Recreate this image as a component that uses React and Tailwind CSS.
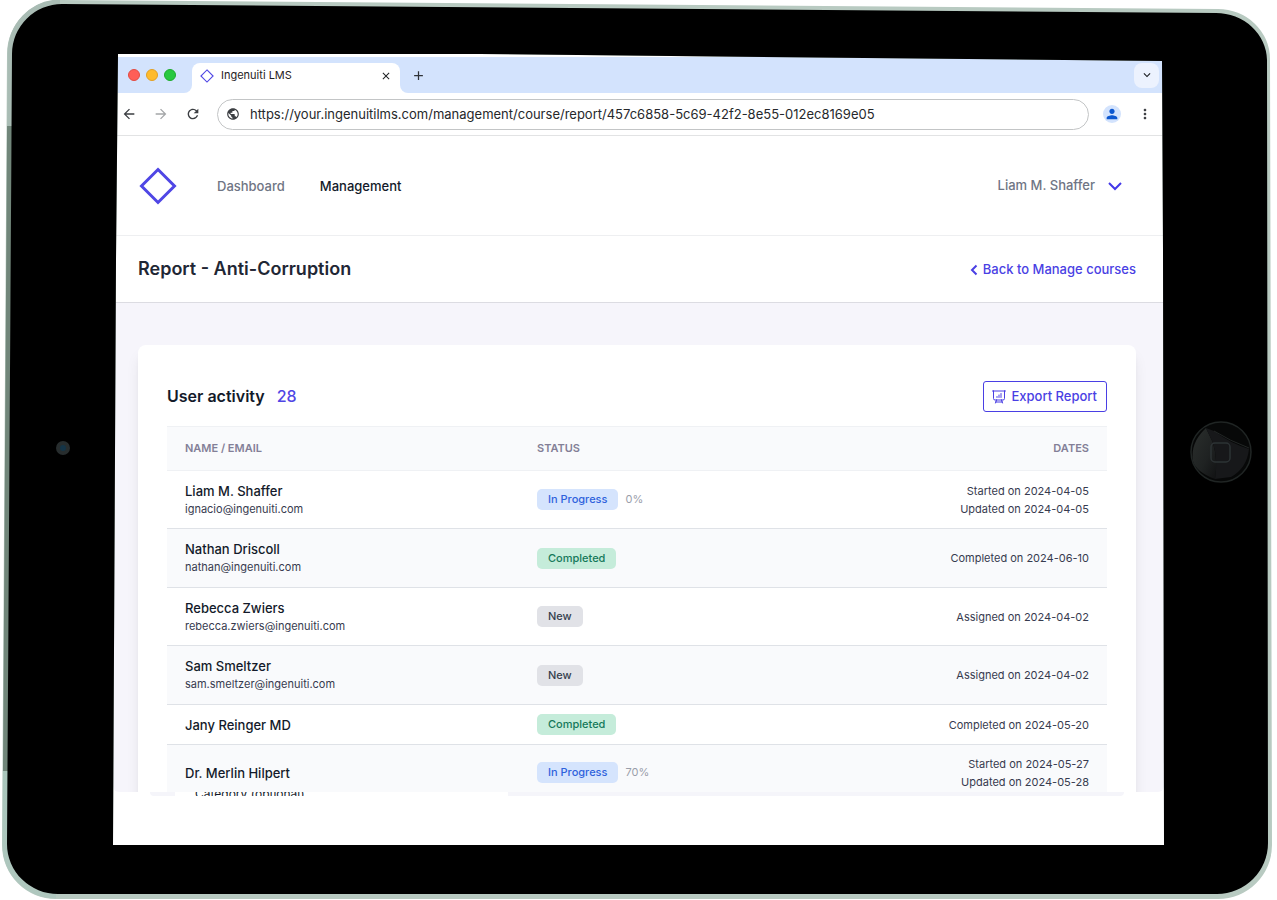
import {
  MdAdd,
  MdArrowBack,
  MdArrowForward,
  MdClose,
  MdExpandMore,
  MdMoreVert,
  MdPerson,
  MdPublic,
  MdRefresh,
} from 'react-icons/md'
import { HiOutlinePresentationChartBar } from 'react-icons/hi2'

const USERS = [
  { name: 'Liam M. Shaffer', email: 'ignacio@ingenuiti.com', status: 'In Progress', progress: 0, dates: ['Started on 2024-04-05', 'Updated on 2024-04-05'] },
  { name: 'Nathan Driscoll', email: 'nathan@ingenuiti.com', status: 'Completed', dates: ['Completed on 2024-06-10'] },
  { name: 'Rebecca Zwiers', email: 'rebecca.zwiers@ingenuiti.com', status: 'New', dates: ['Assigned on 2024-04-02'] },
  { name: 'Sam Smeltzer', email: 'sam.smeltzer@ingenuiti.com', status: 'New', dates: ['Assigned on 2024-04-02'] },
  { name: 'Jany Reinger MD', status: 'Completed', dates: ['Completed on 2024-05-20'] },
  { name: 'Dr. Merlin Hilpert', status: 'In Progress', progress: 70, dates: ['Started on 2024-05-27', 'Updated on 2024-05-28'] },
]

const BADGES = {
  'In Progress': 'bg-[#d5e4fd] text-[#2f62dc]',
  Completed: 'bg-[#c5ecda] text-[#15795a]',
  New: 'bg-[#e1e2e7] text-[#363f4e]',
}

function Diamond({ className, stroke }) {
  return (
    <svg viewBox="0 0 38 38" className={className} fill="none" stroke="#4f46e5" strokeWidth={stroke} aria-hidden="true">
      <path d="M19 2.5 L35.5 19 L19 35.5 L2.5 19 Z" />
    </svg>
  )
}

// Tablet bezel, laid over the screen with a hole cut for it
function TabletFrame() {
  return (
    <svg viewBox="0 0 1277 900" preserveAspectRatio="none" className="absolute inset-0 w-full h-full pointer-events-none" aria-hidden="true">
      <defs>
        <linearGradient id="edge" x1="0" x2="0" y1="0" y2="900" gradientUnits="userSpaceOnUse">
          <stop offset="0" stopColor="#a9bcb4" />
          <stop offset="0.14" stopColor="#a9bcb4" />
          <stop offset="0.14" stopColor="#71867a" />
          <stop offset="0.857" stopColor="#71867a" />
          <stop offset="0.857" stopColor="#a9c5bb" />
          <stop offset="1" stopColor="#afc7be" />
        </linearGradient>
        <linearGradient id="glass" x1="0" x2="1" y1="0" y2="1">
          <stop offset="0" stopColor="#2b2f2d" />
          <stop offset="0.6" stopColor="#1f2222" />
          <stop offset="1" stopColor="#111213" />
        </linearGradient>
      </defs>
      <path
        fill="#b8cac1"
        fillRule="evenodd"
        d="M60 0 L1218 9 A52 50 0 0 1 1270 59 L1272 845 A54 54 0 0 1 1218 899 L56 899 A54 54 0 0 1 2 845 L7 54 A53 54 0 0 1 60 0 Z M118 54 L480 54 L1162 61 L1163 250 L1164 845 L113 845 L116 260 Z"
      />
      <path fill="none" stroke="url(#edge)" strokeWidth="5" d="M60 2 A50 52 0 0 0 10 54 L5 845 A51 51 0 0 0 56 896" />
      <path
        fill="#000"
        fillRule="evenodd"
        d="M62 4 L1216 13 A51 48 0 0 1 1267 60 L1268 843 A51 51 0 0 1 1217 894 L58 894 A51 50 0 0 1 7 844 L12 54 A50 50 0 0 1 62 4 Z M118 54 L480 54 L1162 61 L1163 250 L1164 845 L113 845 L116 260 Z"
      />
      <circle cx="63" cy="448" r="7" fill="#272d2e" />
      <circle cx="63" cy="448" r="3" fill="#143447" />
      <circle cx="1221" cy="452" r="30" fill="#070808" stroke="#202524" strokeWidth="1.5" />
      <path d="M1206 428 Q1190 443 1193 461 Q1196 472 1215 479 Q1218 460 1213 443 Z" fill="url(#glass)" />
      <path d="M1206 428 L1214 431 Q1230 443 1249 449 Q1247 468 1231 477 L1215 479 Q1218 460 1213 443 Z" fill="#17181a" />
      <path d="M1214 431 Q1230 441 1249 448" fill="none" stroke="#222625" />
      <rect x="1211" y="443" width="19" height="19" rx="4" fill="none" stroke="#2d3335" strokeWidth="1.5" />
    </svg>
  )
}

function TabStrip() {
  return (
    <div className="flex h-9 mt-[3px]">
      <div className="w-[79px] bg-[#d3e3fd] rounded-br-lg flex items-center gap-[6px] pl-[15px]">
        <span className="w-3 h-3 rounded-full bg-[#fe5e57] border border-[#e24b42]" />
        <span className="w-3 h-3 rounded-full bg-[#febb2e] border border-[#e2a024]" />
        <span className="w-3 h-3 rounded-full bg-[#28c840] border border-[#1dab2d]" />
      </div>
      <div className="w-[208px] bg-[#d3e3fd] pt-[6px]">
        <div className="h-full bg-white rounded-t-lg flex items-center px-2 pb-[5px]">
          <Diamond className="w-[14px] h-[14px]" stroke="3" />
          <span className="ml-[7px] flex-1 text-[11px] text-[#1f2124]">Ingenuiti LMS</span>
          <button aria-label="Close tab" className="text-[#1f2124]"><MdClose size={12} /></button>
        </div>
      </div>
      <div className="flex-1 bg-[#d3e3fd] rounded-bl-lg flex items-center justify-between pl-[11px] pr-[5px]">
        <button aria-label="New tab" className="text-[#2f3338]"><MdAdd size={15} /></button>
        <button aria-label="Search tabs" className="w-[25px] h-[25px] rounded-lg bg-[#ecf2fe] flex items-center justify-center text-[#1f2124]">
          <MdExpandMore size={14} />
        </button>
      </div>
    </div>
  )
}

function Toolbar() {
  return (
    <div className="h-[43px] shrink-0 border-b border-[#e2e3e4] flex items-center pl-2 pr-[11px] text-[#3b3e42]">
      <button aria-label="Back"><MdArrowBack size={16} /></button>
      <button aria-label="Forward" className="ml-4 text-[#a4a6a8]"><MdArrowForward size={16} /></button>
      <button aria-label="Reload" className="ml-4"><MdRefresh size={16} /></button>
      <div className="ml-4 flex-1 h-[31px] rounded-full border border-[#c3c5c6] flex items-center pl-2 pr-4">
        <MdPublic size={14} />
        <input
          type="text"
          aria-label="Address"
          readOnly
          value="https://your.ingenuitilms.com/management/course/report/457c6858-5c69-42f2-8e55-012ec8169e05"
          className="ml-[10px] pt-px flex-1 min-w-0 text-[13px] text-[#26282b] outline-none"
        />
      </div>
      <button aria-label="Profile" className="ml-[14px] w-[18px] h-[18px] rounded-full bg-[#d3e3fd] text-[#0b57d0] flex items-center justify-center">
        <MdPerson size={16} />
      </button>
      <button aria-label="Menu" className="ml-4"><MdMoreVert size={16} /></button>
    </div>
  )
}

function UserRow({ user }) {
  return (
    <tr className={`border-b border-[#dfe2e7] even:bg-[#f9fafc] ${user.email ? 'h-[58px] even:h-[59px]' : user.dates.length > 1 ? 'h-[56px]' : 'h-[40px]'}`}>
      <td className="pl-[18px]">
        <div className="text-[13px] leading-[18px] font-medium text-[#131a2a]">{user.name}</div>
        {user.email && <div className="text-[11px] leading-[18px] text-[#373b4f]">{user.email}</div>}
      </td>
      <td>
        <div className="flex items-center gap-[7px]">
          <span className={`h-[21px] px-[11px] rounded-[5px] text-[11px] leading-[21px] font-medium ${BADGES[user.status]}`}>{user.status}</span>
          {user.progress !== undefined && <span className="text-[11px] text-[#9a9eaa]">{user.progress}%</span>}
        </div>
      </td>
      <td className="pr-[18px] text-right text-[11px] leading-[18px] text-[#373b4f]">
        {user.dates.map((d) => (
          <div key={d}>{d}</div>
        ))}
      </td>
    </tr>
  )
}

export default function App() {
  return (
    <div className="relative h-screen px-[113px] pt-[54px] pb-[55px] bg-white overflow-hidden font-['Inter',sans-serif]">
      <div className="h-full flex flex-col bg-white">
        <TabStrip />
        <Toolbar />

        <div className="flex-1 min-h-0 overflow-hidden rounded-b-md bg-[#f6f5fb]">
          <header className="h-[100px] bg-white border-b border-[#eeeff1] flex items-center justify-between pl-[26px] pr-[41px]">
            <div className="flex items-center">
              <Diamond className="w-[38px] h-[38px]" stroke="3" />
              <nav className="ml-10 pt-[3px] flex gap-[35px] text-[13px] font-medium">
                <a href="#dashboard" className="text-[#6f7584]">Dashboard</a>
                <a href="#management" className="text-[#131a2a]">Management</a>
              </nav>
            </div>
            <button className="flex items-center gap-3 text-[13px] font-medium text-[#6f7584]">
              Liam M. Shaffer
              <svg width="16" height="16" viewBox="0 0 16 16" fill="none" stroke="#4338e8" strokeWidth="2" aria-hidden="true">
                <path d="M2 5 L8 11 L14 5" />
              </svg>
            </button>
          </header>

          <div className="h-[67px] bg-white border-b border-[#dcdce2] flex items-center justify-between pl-[25px] pr-7">
            <h1 className="text-lg font-semibold text-[#1f2735]">Report - Anti-Corruption</h1>
            <a href="#courses" className="pt-px flex items-center gap-[5px] text-[13px] font-medium text-[#4a3fe4]">
              <svg width="8" height="12" viewBox="0 0 8 12" fill="none" stroke="currentColor" strokeWidth="2" aria-hidden="true">
                <path d="M6.5 1.5 L2 6 L6.5 10.5" />
              </svg>
              Back to Manage courses
            </a>
          </div>

          <main className="pt-[42px] pl-[25px] pr-7">
            <section className="bg-white rounded-lg shadow-lg px-[29px] pt-9 pb-9">
              <div className="flex items-center justify-between h-[31px] mb-[14px]">
                <h2 className="flex gap-3 pb-[2px] text-base font-semibold text-[#131a2a]">
                  User activity <span className="font-medium text-[#5046e5]">28</span>
                </h2>
                <button className="h-[31px] pl-[7px] pr-[9px] flex items-center gap-1 rounded-[3px] border border-[#4a3fe4] text-[13px] font-medium text-[#4a3fe4]">
                  <HiOutlinePresentationChartBar size={16} />
                  Export Report
                </button>
              </div>
              <table className="w-full table-fixed border-collapse text-left">
                <thead>
                  <tr className="h-[44px] bg-[#f9fafc] border-y border-[#eff1f4] text-[11px] text-[#837f97]">
                    <th className="w-[370px] pl-[18px] font-semibold">NAME / EMAIL</th>
                    <th className="font-semibold">STATUS</th>
                    <th className="pr-[18px] font-semibold text-right">DATES</th>
                  </tr>
                </thead>
                <tbody>
                  {USERS.map((user) => (
                    <UserRow key={user.name} user={user} />
                  ))}
                </tbody>
              </table>
            </section>
          </main>
        </div>

        {/* Sliver of the form that sits below the report */}
        <div className="h-1 shrink-0 ml-[37px] mr-10 flex overflow-hidden rounded-b-lg bg-[#f5f5fa]">
          <div className="ml-[25px] w-[333px] h-1 bg-white overflow-hidden flex items-end">
            <label className="pl-5 -mb-1 text-xs leading-3 text-[#131a2a]">Category (optional)</label>
          </div>
        </div>
        <div className="h-[49px] shrink-0" />
      </div>
      <TabletFrame />
    </div>
  )
}
